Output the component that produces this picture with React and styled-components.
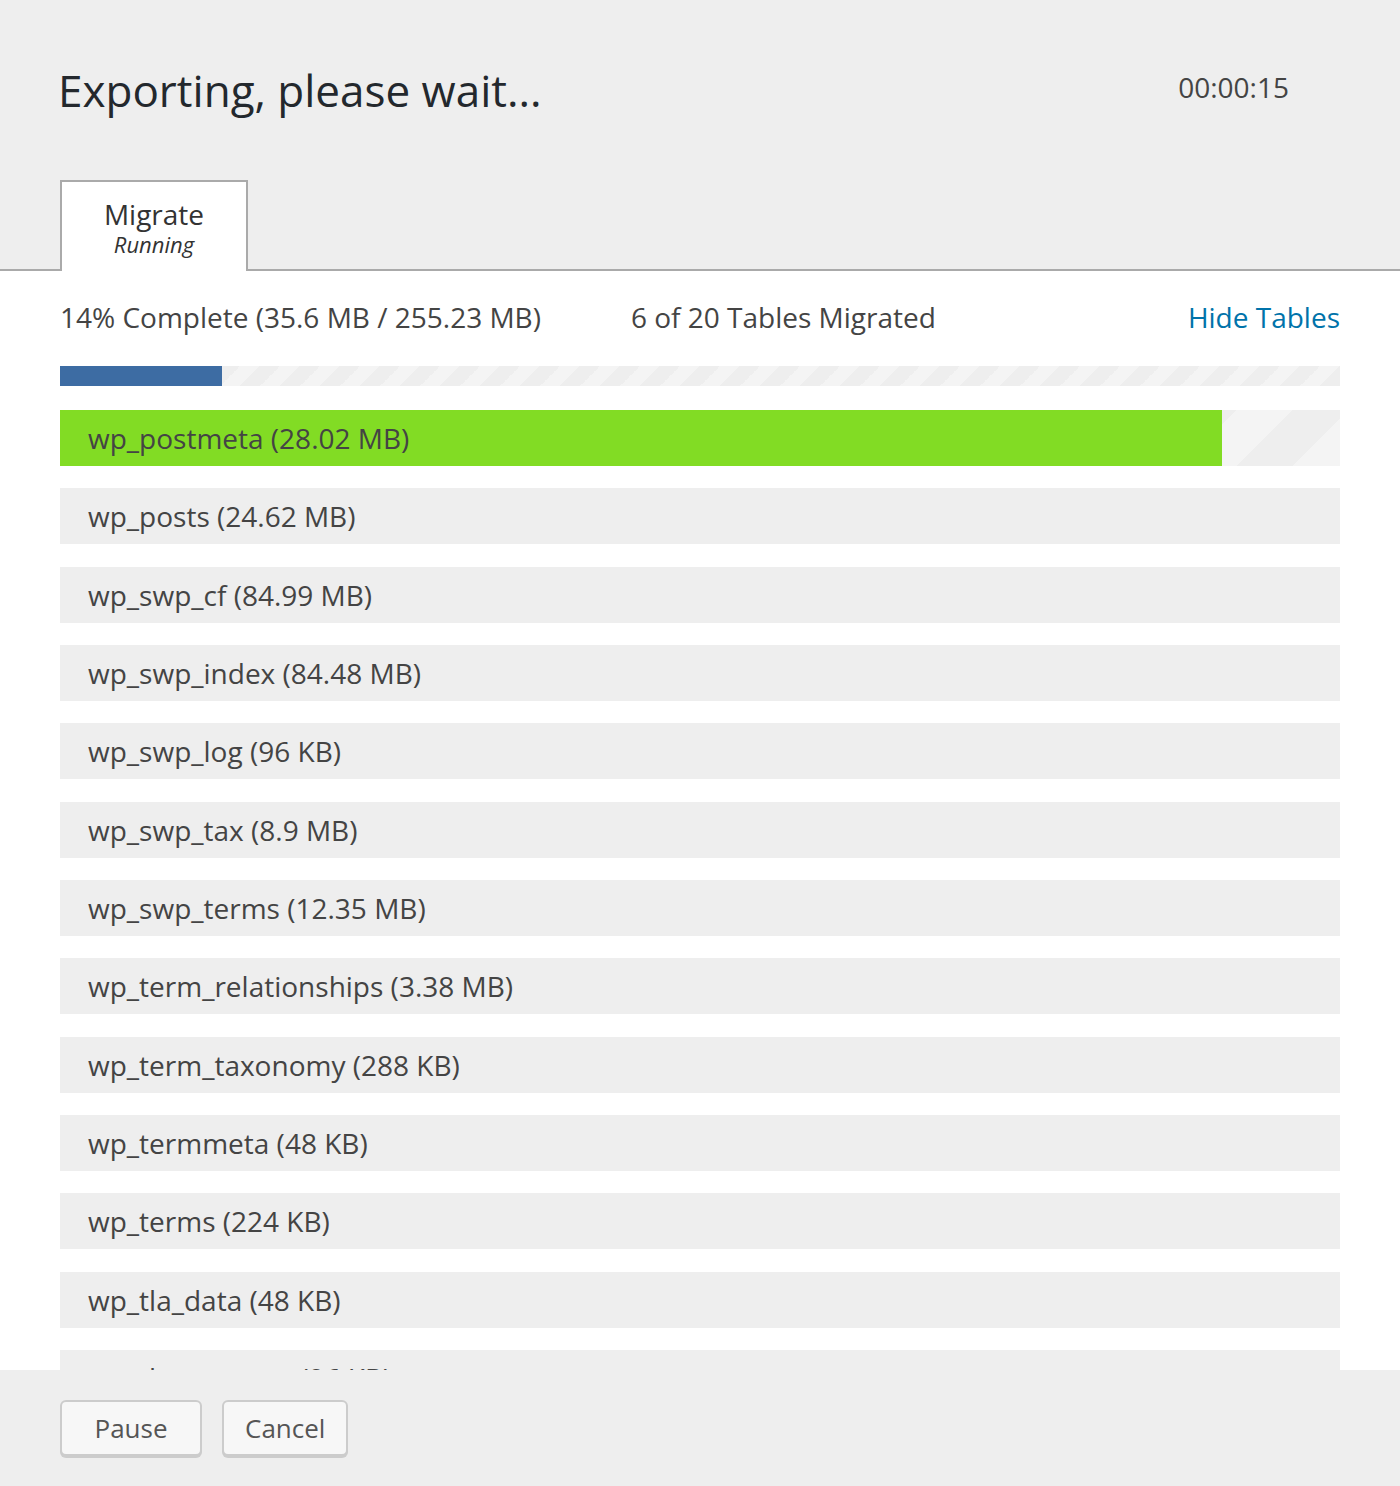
import React from 'react';
import styled, { createGlobalStyle } from 'styled-components';

const GlobalStyle = createGlobalStyle`
  body {
    margin: 0;
    background: #eeeeee;
    font-family: "Open Sans", "Noto Sans", sans-serif;
    color: #444;
  }
`;

const Page = styled.div`
  width: 1400px;
  height: 1486px;
  display: flex;
  flex-direction: column;
  overflow: hidden;
`;

const Header = styled.div`
  background: #eeeeee;
  padding: 60px 60px 0;
  border-bottom: 2px solid #aaaaaa;
`;

const TitleRow = styled.div`
  display: flex;
  justify-content: space-between;
  align-items: flex-start;
`;

const Title = styled.h1`
  margin: 0;
  font-size: 44px;
  line-height: 60px;
  font-weight: 400;
  color: #23282d;
  margin-left: -2px;
`;

const Timer = styled.div`
  margin-top: 7px;
  margin-right: 51px;
  font-size: 28px;
  line-height: 40px;
  color: #444;
`;

const Tabs = styled.div`
  display: flex;
  margin-top: 60px;
`;

const Tab = styled.div`
  width: 184px;
  height: 72px;
  box-sizing: content-box;
  background: #fff;
  border: 2px solid #aaaaaa;
  border-bottom: none;
  margin-bottom: -2px;
  padding: 15px 0 2px;
  display: flex;
  flex-direction: column;
  align-items: center;
`;

const TabName = styled.div`
  font-size: 28px;
  line-height: 34px;
  color: #333;
`;

const TabStatus = styled.div`
  font-size: 22px;
  line-height: 26px;
  font-style: italic;
  color: #333;
`;

const Body = styled.div`
  flex: 1;
  min-height: 0;
  background: #fff;
  padding: 26px 60px 0;
  overflow: hidden;
`;

const StatusRow = styled.div`
  display: flex;
  align-items: center;
  gap: 90px;
  font-size: 28px;
  line-height: 40px;
  color: #444;
`;

const HideLink = styled.a`
  margin-left: auto;
  color: #0073aa;
  text-decoration: none;
  cursor: pointer;
`;

const stripes = (size) => `
  background-color: #eeeeee;
  background-image: linear-gradient(
    -45deg,
    #f4f4f4 25%,
    transparent 25%,
    transparent 50%,
    #f4f4f4 50%,
    #f4f4f4 75%,
    transparent 75%,
    transparent
  );
  background-size: ${size}px ${size}px;
`;

const ProgressTrack = styled.div`
  margin-top: 29px;
  height: 20px;
  ${stripes(40)}
`;

const ProgressFill = styled.div`
  height: 100%;
  background: #3d6ca3;
`;

const TableList = styled.div`
  margin-top: 24px;
  display: flex;
  flex-direction: column;
  gap: 22.33px;
`;

const TableRow = styled.div`
  position: relative;
  height: 56px;
  flex-shrink: 0;
  ${({ $active }) => ($active ? stripes(112) : 'background: #eeeeee;')}
`;

const RowFill = styled.div`
  position: absolute;
  left: 0;
  top: 0;
  bottom: 0;
  background: #82dc24;
`;

const RowLabel = styled.div`
  position: relative;
  padding-left: 28px;
  font-size: 28px;
  line-height: 56px;
  color: #444;
  white-space: nowrap;
`;

const Footer = styled.div`
  background: #eeeeee;
  height: 116px;
  box-sizing: border-box;
  padding: 30px 60px 0;
  display: flex;
  gap: 20px;
  align-items: flex-start;
`;

const Button = styled.button`
  height: 56px;
  min-width: ${({ $minWidth }) => $minWidth || 0}px;
  padding: 0 21px;
  font-family: inherit;
  font-size: 26px;
  color: #555;
  background: #f7f7f7;
  border: 2px solid #cccccc;
  border-radius: 6px;
  box-shadow: 0 2px 0 #cccccc;
  cursor: pointer;
`;

const tables = [
  { name: 'wp_postmeta', size: '28.02 MB', progress: 1162 / 1280 },
  { name: 'wp_posts', size: '24.62 MB' },
  { name: 'wp_swp_cf', size: '84.99 MB' },
  { name: 'wp_swp_index', size: '84.48 MB' },
  { name: 'wp_swp_log', size: '96 KB' },
  { name: 'wp_swp_tax', size: '8.9 MB' },
  { name: 'wp_swp_terms', size: '12.35 MB' },
  { name: 'wp_term_relationships', size: '3.38 MB' },
  { name: 'wp_term_taxonomy', size: '288 KB' },
  { name: 'wp_termmeta', size: '48 KB' },
  { name: 'wp_terms', size: '224 KB' },
  { name: 'wp_tla_data', size: '48 KB' },
  { name: 'wp_tla_rss_map', size: '96 KB' },
  { name: 'wp_usermeta', size: '64 KB' },
];

export default function App() {
  const overall = 162 / 1280;
  return (
    <Page>
      <GlobalStyle />
      <Header>
        <TitleRow>
          <Title>Exporting, please wait...</Title>
          <Timer>00:00:15</Timer>
        </TitleRow>
        <Tabs>
          <Tab>
            <TabName>Migrate</TabName>
            <TabStatus>Running</TabStatus>
          </Tab>
        </Tabs>
      </Header>
      <Body>
        <StatusRow>
          <span>14% Complete (35.6 MB / 255.23 MB)</span>
          <span>6 of 20 Tables Migrated</span>
          <HideLink>Hide Tables</HideLink>
        </StatusRow>
        <ProgressTrack>
          <ProgressFill style={{ width: `${overall * 100}%` }} />
        </ProgressTrack>
        <TableList>
          {tables.map((t) => (
            <TableRow key={t.name} $active={t.progress !== undefined}>
              {t.progress !== undefined && (
                <RowFill style={{ width: `${t.progress * 100}%` }} />
              )}
              <RowLabel>
                {t.name} ({t.size})
              </RowLabel>
            </TableRow>
          ))}
        </TableList>
      </Body>
      <Footer>
        <Button $minWidth={142}>Pause</Button>
        <Button>Cancel</Button>
      </Footer>
    </Page>
  );
}
